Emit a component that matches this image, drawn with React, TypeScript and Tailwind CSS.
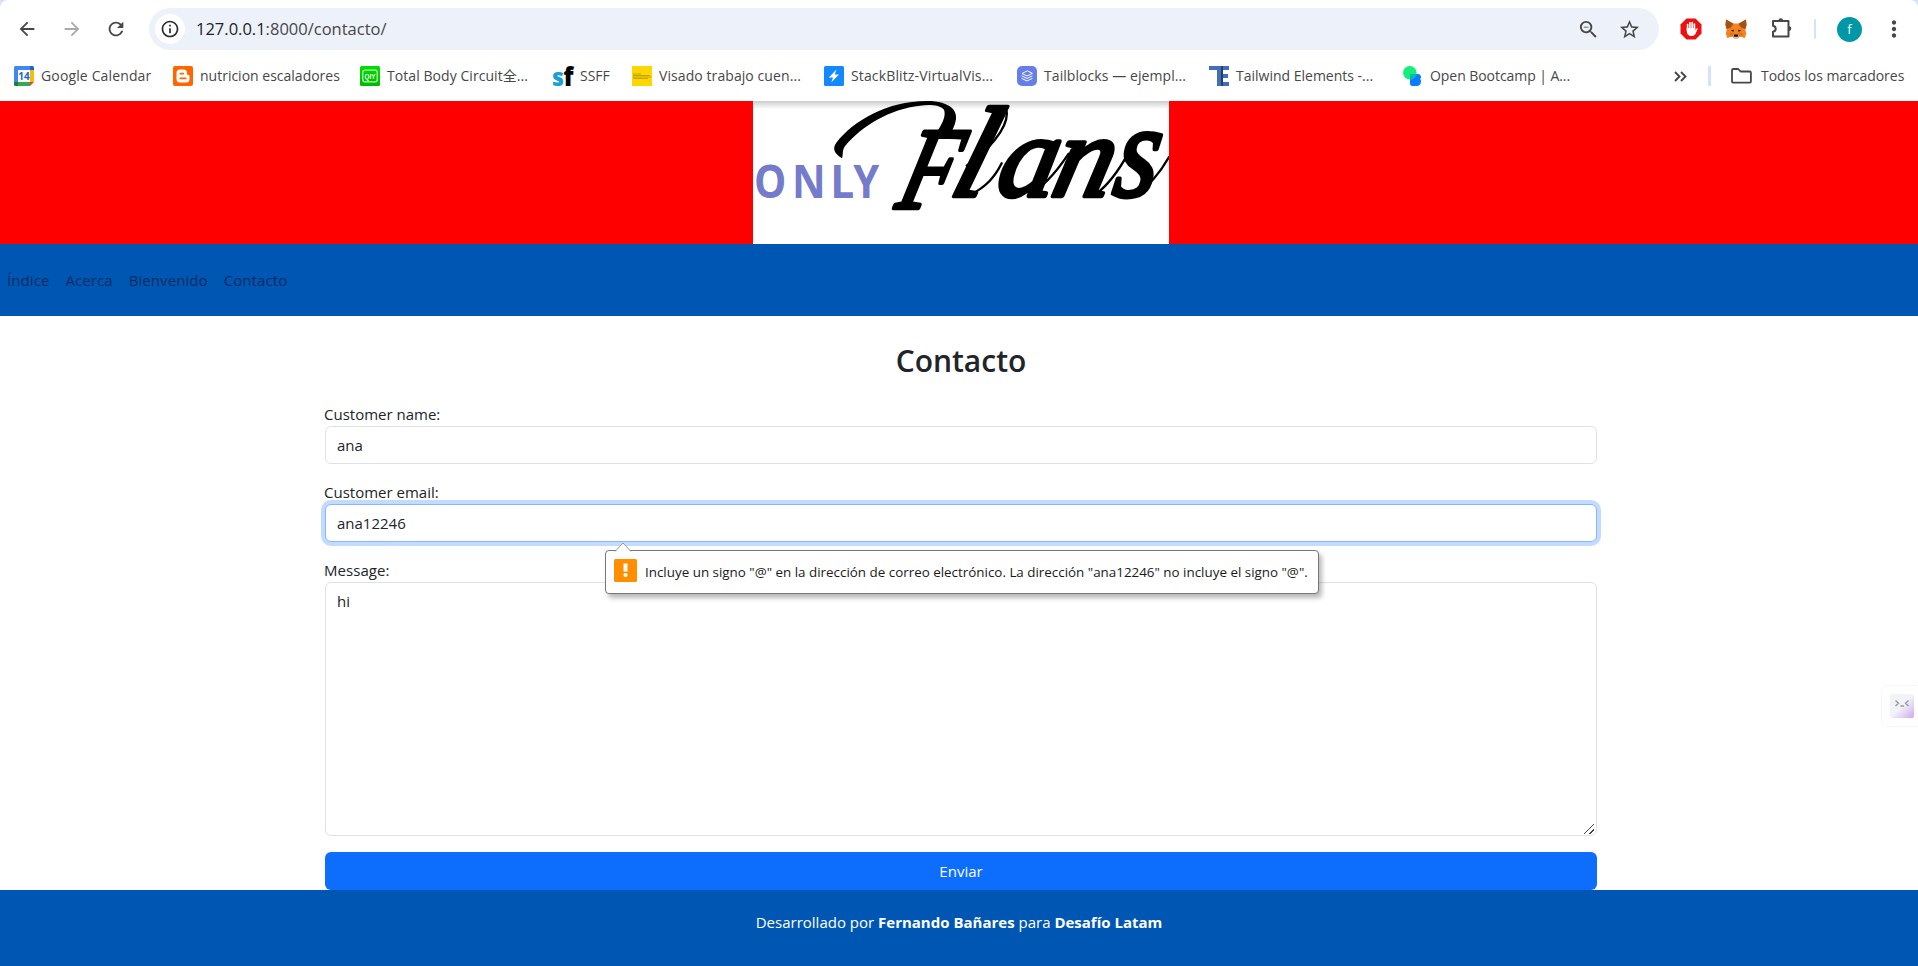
import type { ReactNode } from "react";
import {
  MdArrowBack,
  MdArrowForward,
  MdMoreVert,
  MdOutlineInfo,
  MdRefresh,
  MdStarBorder,
  MdZoomOut,
} from "react-icons/md";

function CalendarIcon() {
  return (
    <svg viewBox="0 0 20 20" className="size-5">
      <path d="M1.5 0H16v4H4v12H0V1.5Q0 0 1.5 0z" fill="#4285f4" />
      <path d="M16 0h2.5Q20 0 20 1.500V4h-4z" fill="#1967d2" />
      <path d="M16 4h4v12h-4z" fill="#fbbc04" />
      <path d="M4 16h12v4H4z" fill="#34a853" />
      <path d="M0 16h4v4H1.500Q0 20 0 18.500z" fill="#188038" />
      <path d="M16 16h4l-4 4z" fill="#ea4335" />
      <path d="M4 4h12v12H4z" fill="#fff" />
      <text x="10" y="13.800" textAnchor="middle" fontSize="10" fontWeight="700" fontFamily="Open Sans, sans-serif" fill="#1967d2">
        14
      </text>
    </svg>
  );
}

function BloggerIcon() {
  return (
    <svg viewBox="0 0 20 20" className="size-5">
      <rect width="20" height="20" rx="2" fill="#ff6600" />
      <path
        d="M7 3.500h3.500a3.500 3.500 0 0 1 3.500 3.500v.8c0 .8.3 1 1.200 1.100.9.100 1.300.4 1.300 1.300V13a3.500 3.500 0 0 1-3.500 3.500H7A3.500 3.500 0 0 1 3.500 13V7A3.500 3.500 0 0 1 7 3.500z"
        fill="#fff"
      />
      <path d="M7.300 7.600h3M7.300 12.400h5.400" stroke="#ff6600" strokeWidth="1.700" strokeLinecap="round" />
    </svg>
  );
}

function VideoIcon() {
  return (
    <svg viewBox="0 0 20 20" className="size-5">
      <defs>
        <linearGradient id="video-green" x1="0" y1="0" x2="0" y2="1">
          <stop offset="0" stopColor="#00e000" />
          <stop offset="1" stopColor="#00b800" />
        </linearGradient>
      </defs>
      <rect width="20" height="20" rx="1.500" fill="url(#video-green)" />
      <rect x="2.800" y="4.200" width="14.400" height="11.600" rx="2" fill="none" stroke="#b8f5b8" strokeWidth="1.200" />
      <text x="10" y="12.700" textAnchor="middle" fontSize="7.500" fontWeight="700" fontFamily="Liberation Sans, sans-serif" fill="#e8ffe8" textLength="11" lengthAdjust="spacingAndGlyphs">
        QIY
      </text>
    </svg>
  );
}

function SfIcon() {
  return (
    <svg viewBox="0 0 20 20" className="size-5 overflow-visible">
      <text x="-1" y="19.500" fontSize="24" fontWeight="800" fontFamily="Open Sans, sans-serif" fill="#1a9fd9" textLength="12" lengthAdjust="spacingAndGlyphs">
        s
      </text>
      <text x="10.500" y="19.500" fontSize="26" fontWeight="800" fontFamily="Open Sans, sans-serif" fill="#000" textLength="10" lengthAdjust="spacingAndGlyphs">
        f
      </text>
    </svg>
  );
}

function VisaIcon() {
  return (
    <svg viewBox="0 0 20 20" className="size-5">
      <path d="M0 0h20v20H0z" fill="#ffd600" />
      <path d="M1 8h8M1 9.500h17M1 11h18M1 12.500h15" stroke="#a8920c" strokeWidth="0.700" />
    </svg>
  );
}

function BoltIcon() {
  return (
    <svg viewBox="0 0 20 20" className="size-5">
      <rect width="20" height="20" rx="1.500" fill="#1389fd" />
      <path d="M12.500 3.500 4.800 11.400h4.200L7.200 16.500l7.800-7.900h-4.300z" fill="#fff" />
    </svg>
  );
}

function LayersIcon() {
  return (
    <svg viewBox="0 0 20 20" className="size-5">
      <rect width="20" height="20" rx="5" fill="#667eea" />
      <path
        d="M10 5 5 7.500l5 2.500 5-2.500zM5 12.500l5 2.500 5-2.500M5 10l5 2.500 5-2.500"
        fill="none"
        stroke="#fff"
        strokeWidth="1"
        strokeLinejoin="round"
        strokeLinecap="round"
      />
    </svg>
  );
}

function ElementsIcon() {
  return (
    <svg viewBox="0 0 20 20" className="size-5" shapeRendering="crispEdges">
      <path d="M0 0h20v4H0zM8 4h12v-4v4h-7v4h6v4h-6v4h7v4H8z" fill="#4270b7" />
      <path d="M12 0h1.500v20H12z" fill="#23406f" />
    </svg>
  );
}

function BootcampIcon() {
  return (
    <svg viewBox="0 0 20 20" className="size-5">
      <path d="M7 8h7.500a3 3 0 0 1 3.500 3c0 1-.4 1.500-.8 2 .6.600.8 1.300.8 2.500 0 2.800-1.800 4.500-4.500 4.500H9.500A2.500 2.500 0 0 1 7 17.500z" fill="#0a7cff" />
      <circle cx="6.800" cy="6.800" r="6.800" fill="#12ef7a" />
      <path d="M7 8h6.500A6.800 6.800 0 0 1 7 13.600z" fill="#0fb5b0" />
    </svg>
  );
}

function StopHandIcon() {
  return (
    <svg viewBox="0 0 22 22" className="size-[22px]">
      <path d="M6.500.5h9l6 6v9l-6 6h-9l-6-6v-9z" fill="#ed1010" />
      <path
        d="M7.600 12.400V6.600M9.900 11V4.800M12.200 11V4.600M14.400 11V6"
        stroke="#fff"
        strokeWidth="1.700"
        strokeLinecap="round"
      />
      <path d="M6.750 10h8.500v2.300l1.200-1.700q.8-.8 1.300.1l-2 4.600c-.8 1.900-1.900 2.700-4 2.700-3.200 0-5-1.900-5-4.800z" fill="#fff" />
    </svg>
  );
}

function FoxIcon() {
  return (
    <svg viewBox="0 0 22 20" className="h-5 w-[22px]">
      <path d="M1 .5 8.500 4.500h5L21 .5 21.500 6 20.300 10.500l1 4-1.400 4.500-5-1.400-2 1.900H9.200l-2-1.900-5 1.400-1.400-4.500 1-4L.5 6z" fill="#f5841f" />
      <path d="M1 .5 8.500 4.800 6 8.500 1.500 10 .5 6zM21 .5 13.500 4.800 16 8.500l4.500 1.500 1-4z" fill="#a0531c" />
      <path d="M5.500 11 9 10.800l-.6 2.300zM16.500 11 13 10.800l.6 2.300z" fill="#3a2a20" />
      <path d="M3 14.500 8 13l1 4-3 .5zM19 14.500 14 13l-1 4 3 .5z" fill="#e2761b" />
      <path d="M8.500 16h5l.8 1.600-1.500 1.900H9.200l-1.500-1.900z" fill="#d5bfb2" />
      <path d="M9 15.500h4l.3 2.300H8.700z" fill="#161616" />
    </svg>
  );
}

function PuzzleIcon() {
  return (
    <svg viewBox="0 0 22 22" className="size-[22px]" fill="none" stroke="#474747" strokeWidth="2" strokeLinejoin="round">
      <path d="M2 4h15.500v15.500H2v-4.800c3.600-.6 3.600-5.400 0-6z" />
      <path d="M7.500 3.500a2.300 2.300 0 0 1 4.600 0zM18 9.300a2.300 2.300 0 0 1 0 4.600z" fill="#474747" stroke="none" />
    </svg>
  );
}

function FolderIcon() {
  return (
    <svg viewBox="0 0 21 16" className="h-4 w-[21px]" fill="none" stroke="#474747" strokeWidth="1.800" strokeLinejoin="round">
      <path d="M2.200 1h5l2.400 2.500h9q1.300 0 1.300 1.300v8.600q0 1.300-1.300 1.300H2.200Q1 14.700 1 13.400V2.300Q1 1 2.200 1z" />
    </svg>
  );
}

function ChevronsIcon() {
  return (
    <svg viewBox="0 0 13 11" className="h-[11px] w-[13px]" fill="none" stroke="#474747" strokeWidth="1.900">
      <path d="M1 1l4.500 4.500L1 10M7 1l4.500 4.500L7 10" />
    </svg>
  );
}

function Bookmark({ icon, label, className }: { icon: ReactNode; label: string; className: string }) {
  return (
    <div className={`flex shrink-0 items-center gap-[7px] whitespace-nowrap ${className}`}>
      {icon}
      <span>{label}</span>
    </div>
  );
}

function BrowserChrome() {
  return (
    <div className="bg-[#d3e3fd] text-[#474747]">
      <div className="h-[101px] rounded-t-lg bg-white">
        <div className="flex h-[58px] items-center">
          <div className="ml-4 flex w-[133px] items-center gap-[22.500px] text-[22px]">
            <MdArrowBack />
            <MdArrowForward className="text-[#a9a9a9]" />
            <MdRefresh />
          </div>
          <div className="flex h-[42px] w-[1510px] items-center rounded-full bg-[#ecf1fa] pl-1.5">
            <div className="flex size-[30px] items-center justify-center rounded-full bg-white">
              <MdOutlineInfo className="size-5 text-[#2b2b2b]" />
            </div>
            <div className="mt-px ml-[11px] text-[16.500px]">
              <span className="text-[#1f1f1f]">127.0.0.1</span>:8000/contacto/
            </div>
            <MdZoomOut className="mr-[18px] ml-auto size-[23px]" />
            <MdStarBorder className="mr-[18px] size-[23px]" />
          </div>
          <div className="ml-[21px] flex items-center">
            <StopHandIcon />
            <div className="ml-[23px]">
              <FoxIcon />
            </div>
            <div className="ml-6 -mt-0.5">
              <PuzzleIcon />
            </div>
            <div className="ml-[21px] h-5 w-0.5 rounded-full bg-[#d3e3fd]" />
            <div className="ml-[21px] flex size-[25px] items-center justify-center rounded-full bg-[#0097a7] text-[13px] leading-none text-white">
              f
            </div>
            <MdMoreVert className="ml-[19px] size-[26px]" />
          </div>
        </div>
        <div className="flex h-9 items-center pl-3.5 text-sm">
          <Bookmark icon={<CalendarIcon />} label="Google Calendar" className="w-[159px] tracking-[0.14px]" />
          <Bookmark icon={<BloggerIcon />} label="nutricion escaladores" className="w-[187px]" />
          <Bookmark icon={<VideoIcon />} label="Total Body Circuit全..." className="w-[193px] tracking-[0.06px]" />
          <Bookmark icon={<SfIcon />} label="SSFF" className="w-[79px]" />
          <Bookmark icon={<VisaIcon />} label="Visado trabajo cuen..." className="w-[192px] tracking-[0.08px]" />
          <Bookmark icon={<BoltIcon />} label="StackBlitz-VirtualVis..." className="w-[193px] tracking-[0.14px]" />
          <Bookmark icon={<LayersIcon />} label="Tailblocks — ejempl..." className="w-[192px] tracking-[0.07px]" />
          <Bookmark icon={<ElementsIcon />} label="Tailwind Elements -..." className="w-[194px]" />
          <Bookmark icon={<BootcampIcon />} label="Open Bootcamp | A..." className="w-[271px] -tracking-[0.06px]" />
          <ChevronsIcon />
          <div className="ml-[21px] h-5 w-[3px] bg-[#d3e3fd]" />
          <div className="ml-5 flex items-center gap-[9px] -tracking-[0.03px]">
            <FolderIcon />
            Todos los marcadores
          </div>
        </div>
      </div>
    </div>
  );
}

function Logo() {
  return (
    <svg viewBox="39 18 1248 429" className="h-[143px] w-[416px] bg-white">
      <defs>
        <linearGradient id="top-shade" x1="0" y1="0" x2="0" y2="1">
          <stop offset="0" stopColor="#000" stopOpacity="0.2" />
          <stop offset="1" stopColor="#000" stopOpacity="0" />
        </linearGradient>
      </defs>
      <g fontFamily="Open Sans, sans-serif" fontWeight="700" fontSize="137" fill="#757bcb">
        <text x="42" y="308" textLength="97" lengthAdjust="spacingAndGlyphs">O</text>
        <text x="156" y="308" textLength="101" lengthAdjust="spacingAndGlyphs">N</text>
        <text x="271" y="308" textLength="72" lengthAdjust="spacingAndGlyphs">L</text>
        <text x="340" y="308" textLength="78" lengthAdjust="spacingAndGlyphs">Y</text>
      </g>
      <path
        d="M306 190C282 176 276 160 290 142C340 78 440 18 560 18C620 18 652 40 648 72C646 88 640 100 632 116L590 112C610 80 618 62 612 44C600 30 570 28 540 32C450 42 366 92 316 152C306 164 310 178 306 190z"
        fill="#000"
      />
      <path
        d="M680 212C740 170 806 100 800 50M690 300C740 275 765 245 785 205M868 295C905 280 950 230 986 176M1065 300C1105 270 1140 220 1164 176M1190 298C1230 270 1262 230 1287 186"
        fill="none"
        stroke="#000"
        strokeWidth="7"
        strokeLinecap="round"
      />
      <g fontFamily="Liberation Serif, serif" fontStyle="italic" fill="#000" stroke="#000" strokeWidth="13" strokeLinejoin="round">
        <text transform="translate(462 338) skewX(-15)" fontSize="350" textLength="165" lengthAdjust="spacingAndGlyphs">F</text>
        <text transform="translate(622 302) skewX(-17)" fontSize="385">l</text>
        <text transform="translate(762 302) skewX(-12)" fontSize="350">a</text>
        <text transform="translate(926 302) skewX(-14)" fontSize="350">n</text>
        <text transform="translate(1112 302) skewX(-10)" fontSize="400" textLength="130" lengthAdjust="spacingAndGlyphs">s</text>
      </g>
      <rect x="39" y="18" width="1248" height="24" fill="url(#top-shade)" />
    </svg>
  );
}

function ValidationBubble() {
  return (
    <div className="absolute top-[calc(100%+9px)] left-[279px] z-10 flex h-11 w-[714px] items-center rounded-[4px] border border-[#777] bg-white pl-2 shadow-[3px_4px_5px_rgba(0,0,0,0.28)]">
      <svg viewBox="0 0 18 10" className="absolute -top-[9px] left-2 h-[10px] w-[18px]">
        <path d="M1 9.500 9 1l8 8.500V10H1z" fill="#fff" />
        <path d="M1 9.500 9 1l8 8.500" fill="none" stroke="#999" />
      </svg>
      <svg viewBox="0 0 23 23" className="-mt-1 size-[23px]">
        <rect width="23" height="23" rx="1.500" fill="#ff8f00" />
        <path d="M9.500 4.500h4v8h-4z" fill="#fff" />
        <circle cx="11.500" cy="16" r="2.100" fill="#fff" />
      </svg>
      <span className="ml-2 whitespace-nowrap text-[13.400px] text-[#1a1a1a]">
        Incluye un signo "@" en la dirección de correo electrónico. La dirección "ana12246" no incluye el signo "@".
      </span>
    </div>
  );
}

function ResizeGrip() {
  return (
    <svg viewBox="0 0 10 10" className="size-[10px]" stroke="#444" strokeWidth="1.300" shapeRendering="crispEdges">
      <path d="M0 10 10 0M5.500 10 10 5.500" />
    </svg>
  );
}

function ContactForm() {
  const field = "h-[38px] rounded-md border bg-white px-[11px] py-[6px]";
  return (
    <main className="mr-[321px] ml-[325px] w-[1272px] pt-6 text-[15px] leading-6 text-[#212529]">
      <h1 className="h-[38px] text-center text-[30px] leading-[41px] font-semibold">Contacto</h1>
      <div className="pt-6">
        <div className="-ml-px">Customer name:</div>
        <div className={`${field} border-[#dee2e6]`}>ana</div>
      </div>
      <div className="pt-4">
        <div className="-ml-px">Customer email:</div>
        <div className={`relative ${field} border-[#86b7fe] shadow-[0_0_0_4px_#c2dbfe]`}>
          ana12246
          <ValidationBubble />
        </div>
      </div>
      <div className="pt-4">
        <div className="-ml-px tracking-[0.05px]">Message:</div>
        <div className="flex h-[254px] justify-between rounded-md border border-[#dee2e6] bg-white pt-[6px] pr-[2px] pb-[1px] pl-[11px]">
          hi
          <div className="self-end">
            <ResizeGrip />
          </div>
        </div>
      </div>
      <div className="mt-4 flex h-[38px] items-center justify-center rounded-md bg-[#0d6efd] text-white">Enviar</div>
    </main>
  );
}

export default function App() {
  return (
    <div className="relative flex h-[966px] w-[1918px] flex-col overflow-hidden bg-white font-['Open_Sans','Noto_Sans_CJK_SC',sans-serif]">
      <BrowserChrome />
      <header>
        <div className="flex h-[143px] bg-[#ff0000] pl-[753px]">
          <Logo />
        </div>
        <nav className="flex h-[72px] items-center gap-4 bg-[#0056b3] pl-[7px] text-[15px] tracking-[0.08px] text-black/50">
          <span>Índice</span>
          <span>Acerca</span>
          <span>Bienvenido</span>
          <span>Contacto</span>
        </nav>
      </header>
      <ContactForm />
      <footer className="flex-1 bg-[#0056b3] pt-5 text-center text-[15px] leading-6 text-white">
        Desarrollado por <b>Fernando Bañares</b> para <b>Desafío Latam</b>
      </footer>
      <aside className="absolute top-[686px] right-0 flex h-10 w-9 items-center rounded-l-md bg-white pl-2 shadow-[0_0_3px_rgba(0,0,0,0.08)]">
        <svg viewBox="0 0 24 24" className="size-6">
          <defs>
            <linearGradient id="assistant" x1="0" y1="0" x2="1" y2="1">
              <stop offset="0.500" stopColor="#f1f3f9" />
              <stop offset="1" stopColor="#cfa8ee" />
            </linearGradient>
          </defs>
          <rect width="24" height="24" rx="2" fill="url(#assistant)" />
          <path d="M5.500 6.500 8.500 9.300l-3 2.700M18.500 6.500l-3 2.800 3 2.700M10.500 12h3.500" fill="none" stroke="#999" strokeWidth="1.400" />
        </svg>
      </aside>
    </div>
  );
}
